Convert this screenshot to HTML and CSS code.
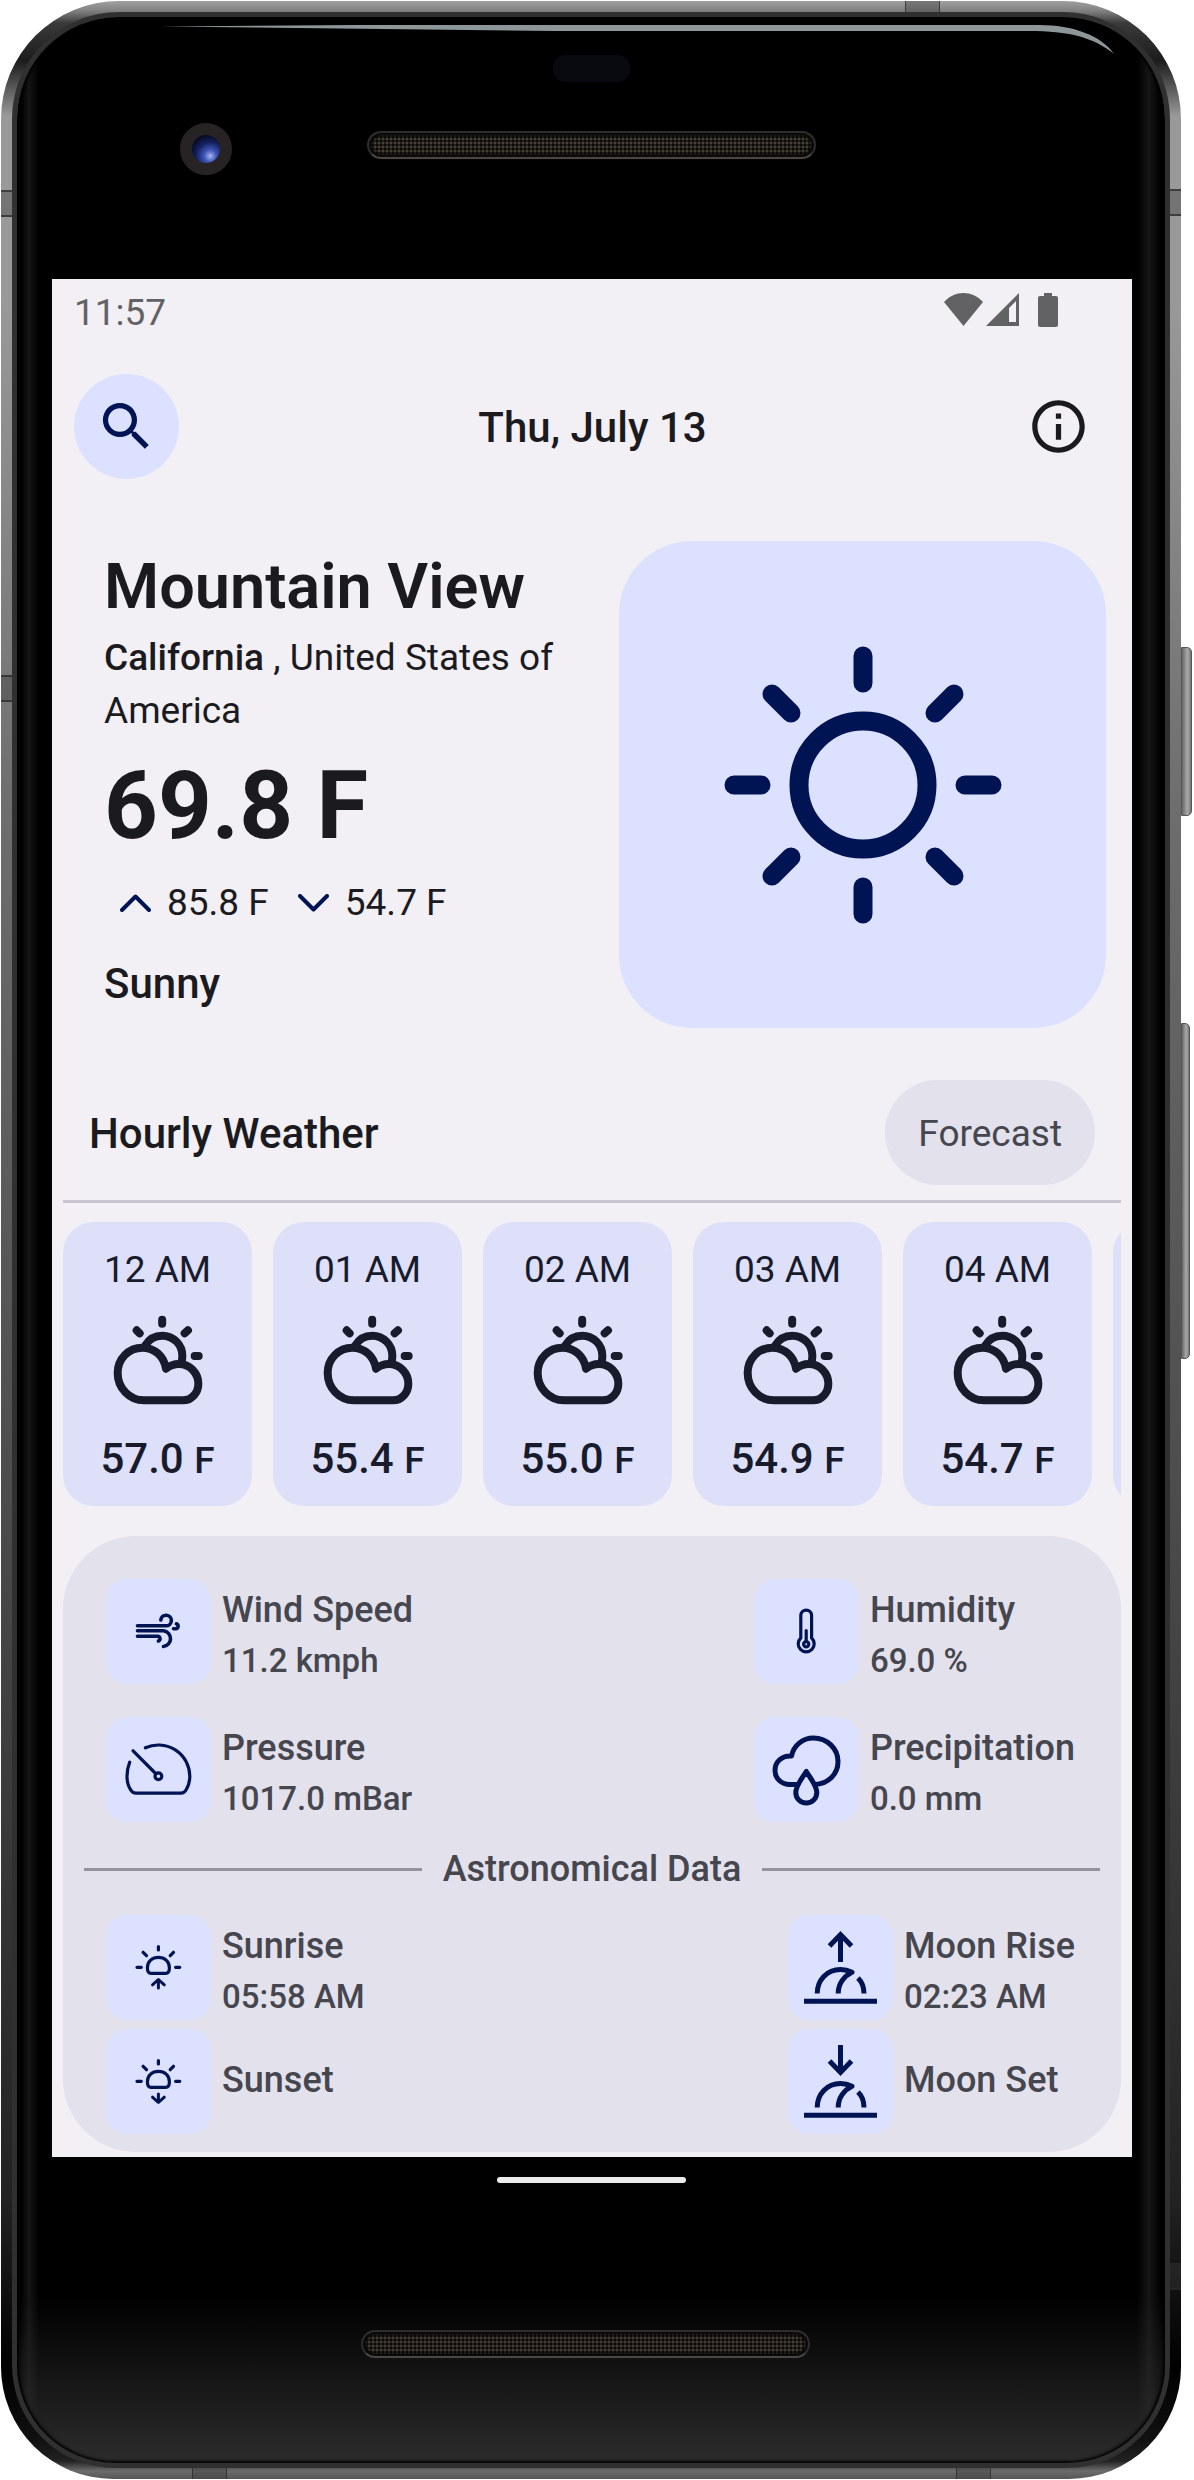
FILE: index.html
```html
<!DOCTYPE html>
<html lang="en">
<head>
<meta charset="utf-8">
<meta name="viewport" content="width=device-width, initial-scale=1">
<title>Weather</title>
<link rel="stylesheet" href="styles.css">
</head>
<body>
<svg class="defs" aria-hidden="true">
  <symbol id="partly-cloudy" viewBox="178 337 288 288">
    <g fill="none" stroke="currentColor" stroke-width="24" stroke-linecap="round" stroke-linejoin="round">
      <path d="M334.500 360V372M258 392L267 401M412 392L402 401M432 469H444"/>
      <path stroke-linecap="butt" d="M283 438C294 419 313 408 335 408C368 408 395 435 395 468C395 476 394 483 392 490"/>
      <path d="M280 602H397A46 50 0 0 0 443 552C443 520 417 493 385 493C370 493 358 497 346 507C340 470 312 444 275 444C234 444 201 477 201 520C201 565 236 602 280 602Z"/>
    </g>
  </symbol>
  <symbol id="half-sun" viewBox="0 0 105 105">
    <g fill="none" stroke="currentColor" stroke-width="3.200" stroke-linecap="round" stroke-linejoin="round">
      <path d="M52.400 31.600V35M37.100 37.300L40.500 40.700M67.500 37.300L64.200 40.700M31 52.300H35.300M69.600 52.300H73.800"/>
      <path d="M45 58.400H59.800C62.300 58.400 63.400 56 63.400 52.800C63.400 46.500 58.500 42.300 52.400 42.300C46.300 42.300 41.400 46.500 41.400 52.800C41.400 56 42.500 58.400 45 58.400Z"/>
    </g>
  </symbol>
  <symbol id="half-moon" viewBox="0 0 105 105">
    <g fill="none" stroke="currentColor" stroke-width="5">
      <path stroke-linejoin="round" d="M29.200 78.500C29.200 65 39 54.500 52.500 54.500C56.500 54.500 60.500 55.500 64 57.300C56 61 50.200 69 50.200 78.500"/>
      <path d="M70 63C74 67 76 72 76 78.500M16 86.300H89"/>
    </g>
  </symbol>
</svg>

<div class="phone">
  <span class="band band-left-a"></span>
  <span class="band band-left-b"></span>
  <span class="band band-right-a"></span>
  <span class="band band-right-b"></span>
  <span class="band band-top"></span>
  <span class="band band-bottom-a"></span>
  <span class="band band-bottom-b"></span>
  <span class="side-key power"></span>
  <span class="side-key volume"></span>

  <div class="glass">
    <svg class="glare" viewBox="0 0 970 34" preserveAspectRatio="xMaxYMin meet" aria-hidden="true">
      <path fill="#8d9799" d="M0 1.500L200 0H890C925 0 953 11 966 29C944 12 920 6 880 6H400Z"/>
    </svg>
    <div class="bezel-top">
      <span class="sensor"></span>
      <div class="earpiece-row">
        <span class="camera"></span>
        <span class="speaker"></span>
      </div>
    </div>

    <div class="screen">
      <div class="status-bar">
        <span>11:57</span>
        <div class="status-icons">
          <svg width="39" height="33" viewBox="0 0 39 33" aria-hidden="true"><path fill="currentColor" d="M0 9C11-3 28-3 39 9L19.500 33Z"/></svg>
          <svg width="33" height="33" viewBox="0 0 33 33" aria-hidden="true"><path fill="currentColor" fill-rule="evenodd" d="M0 33L33 0V33ZM23 15V29H30V8Z"/></svg>
          <svg class="battery" width="20" height="34" viewBox="0 0 20 34" aria-hidden="true"><path fill="currentColor" d="M6 0H14V3H18Q20 3 20 5V32Q20 34 18 34H2Q0 34 0 32V5Q0 3 2 3H6Z"/></svg>
        </div>
      </div>

      <header class="app-bar">
        <button class="icon-button search" type="button" aria-label="Search">
          <svg width="63" height="63" viewBox="0 0 24 24" aria-hidden="true"><path fill="currentColor" d="M15.500 14h-.79l-.28-.27A6.471 6.471 0 0 0 16 9.500 6.500 6.500 0 1 0 9.500 16c1.610 0 3.090-.59 4.230-1.570l.27.28v.79l5 4.990L20.490 19l-4.990-5zm-6 0C7.010 14 5 11.990 5 9.500S7.010 5 9.500 5 14 7.010 14 9.500 11.990 14 9.500 14z"/></svg>
        </button>
        <h1 class="date">Thu, July 13</h1>
        <button class="icon-button" type="button" aria-label="About">
          <svg width="63" height="63" viewBox="0 0 24 24" aria-hidden="true"><path fill="currentColor" d="M11 7h2v2h-2zm0 4h2v6h-2zm1-9C6.480 2 2 6.480 2 12s4.480 10 10 10 10-4.480 10-10S17.520 2 12 2zm0 18c-4.410 0-8-3.590-8-8s3.590-8 8-8 8 3.590 8 8-3.590 8-8 8z"/></svg>
        </button>
      </header>

      <section class="current">
        <div class="summary">
          <h2 class="city">Mountain View</h2>
          <p class="region"><b>California</b> , United States of America</p>
          <p class="temperature">69.8 F</p>
          <p class="range">
            <svg width="31" height="18" viewBox="0 0 31 18" aria-hidden="true"><path class="chevron" d="M2 16L15.500 2.500L29 16"/></svg>
            <span>85.8 F</span>
            <svg width="31" height="18" viewBox="0 0 31 18" aria-hidden="true"><path class="chevron" d="M2 2L15.500 15.500L29 2"/></svg>
            <span>54.7 F</span>
          </p>
          <p class="condition">Sunny</p>
        </div>
        <div class="condition-card">
          <svg width="278" height="278" viewBox="-139 -139 278 278" aria-hidden="true">
            <g fill="none" stroke="currentColor" stroke-width="19" stroke-linecap="round">
              <circle r="64"/>
              <path d="M0-129V-102M0 102V129M-129 0H-102M102 0H129M-91-91L-72-72M91-91L72-72M-91 91L-72 72M91 91L72 72"/>
            </g>
          </svg>
        </div>
      </section>

      <section>
        <div class="section-head">
          <h2>Hourly Weather</h2>
          <button class="pill" type="button">Forecast</button>
        </div>
        <ul class="hours">
          <li class="hour"><span class="time">12 AM</span><svg><use href="#partly-cloudy"/></svg><span class="degrees">57.0 <small>F</small></span></li>
          <li class="hour"><span class="time">01 AM</span><svg><use href="#partly-cloudy"/></svg><span class="degrees">55.4 <small>F</small></span></li>
          <li class="hour"><span class="time">02 AM</span><svg><use href="#partly-cloudy"/></svg><span class="degrees">55.0 <small>F</small></span></li>
          <li class="hour"><span class="time">03 AM</span><svg><use href="#partly-cloudy"/></svg><span class="degrees">54.9 <small>F</small></span></li>
          <li class="hour"><span class="time">04 AM</span><svg><use href="#partly-cloudy"/></svg><span class="degrees">54.7 <small>F</small></span></li>
          <li class="hour"></li>
        </ul>
      </section>

      <section class="details">
        <div class="columns">
          <div class="column roomy">
            <div class="metric">
              <svg class="tile" viewBox="0 0 105 105" aria-hidden="true"><g fill="none" stroke="currentColor" stroke-width="3.600" stroke-linecap="round"><path d="M31.500 46.800H60A5.300 5.300 0 1 0 54.800 41M31.500 51.800H57.500A7.900 7.900 0 0 1 57.500 67.500M31.500 57.200H52A2.500 2.500 0 0 1 52.400 62M70.400 44.800A2.600 2.600 0 0 1 70 49.800H67.500"/></g></svg>
              <div class="reading"><h3>Wind Speed</h3><p>11.2 kmph</p></div>
            </div>
            <div class="metric">
              <svg class="tile" viewBox="0 0 105 105" aria-hidden="true"><g fill="none" stroke="currentColor" stroke-width="3.200" stroke-linecap="round"><path d="M39.400 30.800A31.400 31.400 0 0 1 83.800 59.200C83.800 64 82.500 69 80 73C78.700 75.200 77 76.200 75 76.200H30C28 76.200 26 75.200 24.800 73C22 69 21 64 21 59.200C21 54 22 49.500 23.700 45.200M27.100 33.800L49.600 56.500"/><circle cx="52.400" cy="59.200" r="3.400"/></g></svg>
              <div class="reading"><h3>Pressure</h3><p>1017.0 mBar</p></div>
            </div>
          </div>
          <div class="column roomy">
            <div class="metric">
              <svg class="tile" viewBox="0 0 105 105" aria-hidden="true"><g fill="none" stroke="currentColor" stroke-width="3.200" stroke-linecap="round"><path d="M46.800 59V36.500A5.400 5.400 0 0 1 57.600 36.500V59A8 8 0 1 1 46.800 59ZM52.200 51.500V62"/><circle cx="52.200" cy="65.200" r="2.600"/></g></svg>
              <div class="reading"><h3>Humidity</h3><p>69.0 %</p></div>
            </div>
            <div class="metric">
              <svg class="tile" viewBox="0 0 105 105" aria-hidden="true"><g fill="none" stroke="currentColor" stroke-width="5" stroke-linejoin="round"><path d="M44.500 67.500H36C27.500 67.500 21 61.500 21 53.500C21 45 27.500 39 36 39H37.500C39.500 28.500 48.500 21 59.500 21C73 21 84 31.500 84 44.500C84 57 74.500 67 60.500 67.500"/><path d="M52.300 54.500C48 61.500 41.800 68.500 41.800 75.500C41.800 81.500 46.500 86 52.300 86C58 86 62.800 81.500 62.800 75.500C62.800 68.500 56.500 61.500 52.300 54.500Z"/></g></svg>
              <div class="reading"><h3>Precipitation</h3><p>0.0 mm</p></div>
            </div>
          </div>
        </div>

        <h3 class="divider-title">Astronomical Data</h3>

        <div class="columns">
          <div class="column">
            <div class="metric">
              <svg class="tile" viewBox="0 0 105 105" aria-hidden="true"><use href="#half-sun"/><path class="small-arrow" d="M52.400 73V65M46.500 69.800L52.400 64.500L58.300 69.800"/></svg>
              <div class="reading"><h3>Sunrise</h3><p>05:58 AM</p></div>
            </div>
            <div class="metric">
              <svg class="tile" viewBox="0 0 105 105" aria-hidden="true"><use href="#half-sun"/><path class="small-arrow" d="M52.400 65V73M46.500 68.200L52.400 73.500L58.300 68.200"/></svg>
              <div class="reading title-only"><h3>Sunset</h3></div>
            </div>
          </div>
          <div class="column">
            <div class="metric">
              <svg class="tile" viewBox="0 0 105 105" aria-hidden="true"><use href="#half-moon"/><path class="big-arrow" d="M52.500 47V20M41.500 31L52.500 19.500L63.500 31"/></svg>
              <div class="reading"><h3>Moon Rise</h3><p>02:23 AM</p></div>
            </div>
            <div class="metric">
              <svg class="tile" viewBox="0 0 105 105" aria-hidden="true"><use href="#half-moon"/><path class="big-arrow" d="M52.500 16V43M41.500 32L52.500 43.500L63.500 32"/></svg>
              <div class="reading title-only"><h3>Moon Set</h3></div>
            </div>
          </div>
        </div>
      </section>
    </div>

    <div class="bezel-bottom">
      <span class="home-bar"></span>
      <span class="speaker"></span>
    </div>
  </div>
</div>
</body>
</html>
```
FILE: styles.css
```css
:root {
  --surface: #f2f0f5;
  --surface-variant: #e2e1ec;
  --primary-container: #dce1ff;
  --on-primary-container: #001453;
  --on-surface: #1b1b1f;
  --on-surface-variant: #46464f;
}

* {
  box-sizing: border-box;
}

body {
  margin: 0;
  padding: 1px 13px 1px 1px;
  background: #fff;
  font-family: Roboto, "Liberation Sans", sans-serif;
  color: var(--on-surface);
}

h1,
h2,
h3,
p,
ul {
  margin: 0;
  padding: 0;
  font-weight: 500;
}

button {
  border: 0;
  padding: 0;
  font: inherit;
  color: inherit;
  cursor: pointer;
}

svg {
  flex: none;
}

.defs {
  position: absolute;
  width: 0;
  height: 0;
}

/* Handset */

.phone {
  position: relative;
  padding: 16px;
  border-radius: 118px 118px 112px 112px;
  background: linear-gradient(#a0a0a0 0, #808080 10px, #3a3a3a 22px, #1c1c1c 60px, #999 115px, #999 300px, #6e6e6e 800px, #4c4c4c 1500px, #383838 1850px, #222 2200px, #000 2370px, #111 2440px, #222 2460px, #6c6c6c 2470px, #555 100%);
}

.glass {
  position: relative;
  border-radius: 102px 102px 98px 98px;
  background: linear-gradient(rgba(0, 0, 0, 0) 2280px, #2c2c2c 2446px), linear-gradient(90deg, #000 4px, #141414 12px, #000 22px, #000 calc(100% - 28px), #161616 calc(100% - 16px), #000 calc(100% - 4px));
  box-shadow: 0 0 0 5px #303030, inset 0 0 3px 2px #000;
}

.glare {
  position: absolute;
  top: 8px;
  right: 47px;
  width: 958px;
}

.band {
  position: absolute;
  background: rgba(60, 60, 60, 0.4);
  border: 0 solid rgba(40, 40, 40, 0.7);
}

.band-left-a,
.band-left-b,
.band-right-a,
.band-right-b {
  width: 16px;
  height: 27px;
  border-width: 2px 0;
}

.band-left-a { left: 0; top: 189px; }
.band-left-b { left: 0; top: 674px; }
.band-right-a { right: 0; top: 188px; }
.band-right-b { right: 0; top: 2262px; }

.band-top,
.band-bottom-a,
.band-bottom-b {
  width: 35px;
  height: 16px;
  border-width: 0 1px;
}

.band-top { right: 241px; top: 0; }
.band-bottom-a { left: 191px; bottom: 0; }
.band-bottom-b { right: 190px; bottom: 0; }

.side-key {
  position: absolute;
  border-radius: 0 5px 5px 0;
  background: linear-gradient(90deg, #666, #aaa 60%, #777);
  border: 1px solid #555;
}

.power {
  right: -11px;
  top: 646px;
  width: 11px;
  height: 169px;
}

.volume {
  right: -9px;
  top: 1022px;
  width: 9px;
  height: 336px;
}

.bezel-top {
  display: flex;
  flex-direction: column;
  align-items: center;
  height: 262px;
  padding-top: 38px;
}

.sensor {
  width: 77px;
  height: 27px;
  border-radius: 12px;
  background: #090a0f;
}

.earpiece-row {
  display: grid;
  grid-template-columns: 1fr auto 1fr;
  width: 100%;
  padding: 41px 0 0 163px;
}

.camera {
  width: 52px;
  height: 52px;
  border: 12px solid #272324;
  border-radius: 50%;
  background: radial-gradient(circle at 65% 75%, #a9b6f0 0, #3d55b8 22%, #14205c 50%, #05081c 80%);
}

.earpiece-row .speaker {
  margin: 8px 163px 0 0;
}

.speaker {
  width: 449px;
  height: 28px;
  border: 2px solid #2e2c2c;
  border-bottom-color: #4b4642;
  border-radius: 14px;
  background: radial-gradient(#443e34 1px, #0b0a09 2px) 0 0 / 4px 4px;
  box-shadow: inset 0 0 2px 3px #0b0a09;
}

.bezel-bottom {
  display: flex;
  flex-direction: column;
  align-items: center;
  gap: 147px;
  padding: 20px 0 105px;
}

.bezel-bottom .speaker {
  margin-right: 12px;
}

.home-bar {
  width: 189px;
  height: 6px;
  border-radius: 3px;
  background: #ececec;
}

/* App */

.screen {
  margin: 0 33px 0 35px;
  padding-bottom: 5px;
  background: var(--surface);
}

.status-bar {
  display: flex;
  align-items: center;
  justify-content: space-between;
  height: 66px;
  padding: 0 74px 0 22px;
  font-size: 37px;
  color: #626264;
}

.status-icons {
  display: flex;
  gap: 3px;
  padding-bottom: 4px;
}

.battery {
  margin-left: 16px;
}

.app-bar {
  display: flex;
  align-items: center;
  justify-content: space-between;
  padding: 29px 21px 0 22px;
}

.icon-button {
  display: flex;
  align-items: center;
  justify-content: center;
  width: 105px;
  height: 105px;
  border-radius: 50%;
  background: transparent;
}

.search {
  background: var(--primary-container);
  color: var(--on-primary-container);
}

.date,
.section-head h2 {
  padding-top: 2px;
  font-size: 42px;
  line-height: 63px;
}

.current {
  display: flex;
  gap: 10px;
  padding: 62px 26px 0 52px;
}

.summary {
  flex: 1;
  padding-top: 4px;
}

.city {
  font-size: 63px;
  line-height: 84px;
  font-weight: 600;
}

.region {
  margin-top: 2px;
  font-size: 37px;
  line-height: 53px;
  font-weight: 400;
}

.region b {
  font-weight: 500;
}

.temperature {
  margin-top: 11px;
  font-size: 94px;
  line-height: 116px;
  font-weight: 700;
}

.range {
  display: flex;
  align-items: center;
  gap: 16px;
  margin-top: 12px;
  padding-left: 16px;
  font-size: 37px;
  line-height: 53px;
  font-weight: 400;
}

.range span + svg {
  margin-left: 13px;
}

.chevron {
  fill: none;
  stroke: var(--on-primary-container);
  stroke-width: 4;
  stroke-linecap: round;
  stroke-linejoin: round;
}

.condition {
  margin-top: 23px;
  font-size: 42px;
  line-height: 63px;
}

.condition-card {
  display: flex;
  align-items: center;
  justify-content: center;
  width: 487px;
  height: 487px;
  border-radius: 73px;
  background: var(--primary-container);
  color: var(--on-primary-container);
}

.section-head {
  display: flex;
  align-items: center;
  justify-content: space-between;
  margin: 52px 11px 0;
  padding: 0 26px 15px;
  border-bottom: 3px solid #c8c5d0;
}

.pill {
  height: 105px;
  padding: 2px 33px 0;
  border-radius: 53px;
  background: var(--surface-variant);
  color: var(--on-surface-variant);
  font-size: 37px;
}

.hours {
  display: flex;
  gap: 21px;
  margin: 19px 11px 0;
  overflow: hidden;
  list-style: none;
}

.hour {
  display: flex;
  flex: none;
  flex-direction: column;
  align-items: center;
  width: 189px;
  padding: 21px 0 16px;
  border-radius: 31px;
  background: #dee0fa;
  color: #171b2c;
}

.hour svg {
  width: 96px;
  height: 96px;
  margin: 16px 0 19px;
}

.time {
  font-size: 37px;
  line-height: 53px;
  font-weight: 400;
}

.degrees {
  font-size: 42px;
  line-height: 63px;
  font-weight: 500;
}

.degrees small {
  font-size: 37px;
  line-height: 1;
}

.details {
  margin: 30px 11px 0;
  padding: 43px 0 18px;
  border-radius: 73px;
  background: var(--surface-variant);
  color: var(--on-surface-variant);
}

.columns {
  display: flex;
  justify-content: space-between;
  padding: 0 46px 0 43px;
}

.column {
  display: flex;
  flex-direction: column;
  gap: 9px;
}

.roomy {
  gap: 33px;
}

.metric {
  display: flex;
  align-items: center;
  height: 105px;
  gap: 11px;
}

.tile {
  width: 105px;
  height: 105px;
  border-radius: 21px;
  background: var(--primary-container);
  color: var(--on-primary-container);
}

.small-arrow,
.big-arrow {
  fill: none;
  stroke: currentColor;
  stroke-width: 5;
}

.small-arrow {
  stroke-width: 3;
  stroke-linecap: round;
  stroke-linejoin: round;
}

.reading {
  padding-top: 5px;
}

.reading h3,
.divider-title {
  font-size: 36px;
  line-height: 53px;
}

.reading p {
  font-size: 33px;
  line-height: 48px;
}

.title-only {
  padding: 0 0 2px;
}

.divider-title {
  display: flex;
  align-items: center;
  gap: 21px;
  padding: 21px 21px 19px;
}

.divider-title::before,
.divider-title::after {
  content: "";
  flex: 1;
  height: 3px;
  background: #94929c;
}
```
